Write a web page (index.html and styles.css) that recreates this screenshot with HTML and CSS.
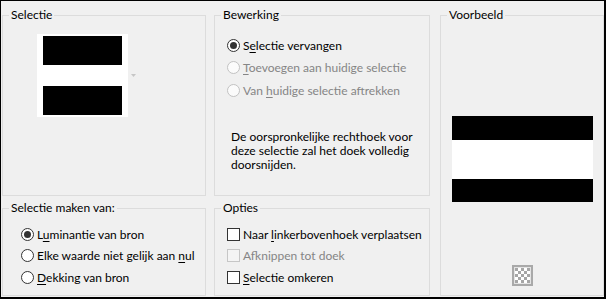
FILE: index.html
```html
<!DOCTYPE html>
<html lang="nl">
<head>
<meta charset="utf-8">
<title>Selectie</title>
<link rel="stylesheet" href="styles.css">
</head>
<body>
<div class="dialog">
  <fieldset class="grp g-sel">
    <legend>Selectie</legend>
    <div class="sel-body">
      <div class="thumb"><div class="bar"></div><div class="bar"></div></div>
      <svg class="drop" width="5" height="3" viewBox="0 0 5 3"><path d="M0 0h5L2.5 3z" fill="#c6c6c6"/></svg>
    </div>
  </fieldset>

  <fieldset class="grp g-bew">
    <legend>Bewerking</legend>
    <div class="opts opts-bew">
      <div class="opt"><span class="radio on"></span><span>S<u>e</u>lectie vervangen</span></div>
      <div class="opt dis"><span class="radio"></span><span><u>T</u>oevoegen aan huidige selectie</span></div>
      <div class="opt dis"><span class="radio"></span><span>Van <u>h</u>uidige selectie aftrekken</span></div>
    </div>
    <p class="note">De oorspronkelijke rechthoek voor<br>deze selectie zal het doek volledig<br>doorsnijden.</p>
  </fieldset>

  <fieldset class="grp g-voor">
    <legend>Voorbeeld</legend>
    <div class="voor-body">
      <div class="big"><div class="b1"></div><div class="b2"></div><div class="b3"></div></div>
      <div class="tp"><div class="checker"></div></div>
    </div>
  </fieldset>

  <fieldset class="grp g-make">
    <legend>Selectie maken van:</legend>
    <div class="opts opts-low">
      <div class="opt"><span class="radio on"></span><span>L<u>u</u>minantie van bron</span></div>
      <div class="opt"><span class="radio"></span><span>Elke waarde niet gelijk aan <u>n</u>ul</span></div>
      <div class="opt"><span class="radio"></span><span><u>D</u>ekking van bron</span></div>
    </div>
  </fieldset>

  <fieldset class="grp g-opt">
    <legend>Opties</legend>
    <div class="opts opts-low opts-chk">
      <div class="opt"><span class="check"></span><span>Naar <u>l</u>inkerbovenhoek verplaatsen</span></div>
      <div class="opt dis"><span class="check"></span><span>Af<u>k</u>nippen tot doek</span></div>
      <div class="opt"><span class="check"></span><span><u>S</u>electie omkeren</span></div>
    </div>
  </fieldset>
</div>
</body>
</html>
```
FILE: styles.css
```css
html, body {
  margin: 0;
  background: #f0f0f0;
}
body {
  font-family: Lato, "Noto Sans", sans-serif;
  font-size: 12px;
  color: #000;
}
.dialog {
  box-sizing: border-box;
  width: 606px;
  height: 299px;
  border: solid #000;
  border-width: 1px 2px 2px 1px;
  background: #f0f0f0;
  padding: 7px 0 0 1px;
  display: grid;
  grid-template-columns: 204px 8px 216px 10px 164px;
  grid-template-rows: 188px 5px 95px;
}
.grp {
  margin: 0;
  padding: 0;
  border: 1px solid #dcdcdc;
  min-width: 0;
}
.grp legend {
  padding: 0 2px;
  margin-left: 6px;
  line-height: 14px;
  font-size: 12px;
}
.g-sel { grid-column: 1; grid-row: 1; }
.g-bew { grid-column: 3; grid-row: 1; }
.g-voor { grid-column: 5; grid-row: 1 / 4; }
.g-make { grid-column: 1; grid-row: 3; }
.g-opt { grid-column: 3; grid-row: 3; }

.sel-body {
  padding: 12px 0 0 34px;
  display: flex;
  align-items: center;
}
.thumb {
  box-sizing: border-box;
  width: 91px;
  height: 83px;
  background: #fff;
  padding: 2px 6px;
  display: flex;
  flex-direction: column;
  justify-content: space-between;
}
.thumb .bar {
  height: 29px;
  background: #000;
}
.drop {
  margin-left: 3px;
  display: block;
}

.opts {
  display: flex;
  flex-direction: column;
  padding-left: 12px;
}
.opts-bew {
  padding-top: 15px;
  gap: 6.5px;
}
.opts-low {
  padding-top: 11px;
  gap: 5.7px;
  padding-left: 18px;
}
.opts-chk {
  padding-left: 12px;
}
.opt {
  display: flex;
  align-items: center;
  height: 16px;
  white-space: nowrap;
}
.opt.dis {
  color: #858585;
}
.opt u {
  text-underline-offset: 2px;
}
.radio {
  box-sizing: border-box;
  width: 13px;
  height: 13px;
  border: 1px solid #333;
  border-radius: 50%;
  background: #fff;
  margin-right: 3px;
  display: flex;
  align-items: center;
  justify-content: center;
  flex: none;
}
.radio.on::after {
  content: "";
  width: 7px;
  height: 7px;
  border-radius: 50%;
  background: #333;
}
.opt.dis .radio {
  border-color: #c2c2c2;
  background: #fbfbfb;
}
.check {
  box-sizing: border-box;
  width: 13px;
  height: 13px;
  border: 1px solid #333;
  background: #fff;
  margin-right: 3px;
  flex: none;
}
.opt.dis .check {
  border-color: #c6c6c6;
  background: #f4f4f4;
}
.note {
  margin: 32px 0 0 16px;
  line-height: 14px;
}

.voor-body {
  display: flex;
  flex-direction: column;
  align-items: center;
  padding-top: 94px;
}
.big {
  width: 141px;
  height: 86px;
  display: flex;
  flex-direction: column;
}
.big .b1 { height: 24px; background: #000; }
.big .b2 { height: 39px; background: #fff; }
.big .b3 { height: 23px; background: #000; }
.tp {
  box-sizing: border-box;
  width: 21px;
  height: 21px;
  margin-top: 63px;
  border: 2px solid #a9a9a9;
  background: #e3e3e3;
  padding: 1px;
}
.checker {
  width: 15px;
  height: 15px;
  background: repeating-conic-gradient(#fff 0 25%, #a6a6a6 0 50%) 0 0 / 6px 6px;
}
```
